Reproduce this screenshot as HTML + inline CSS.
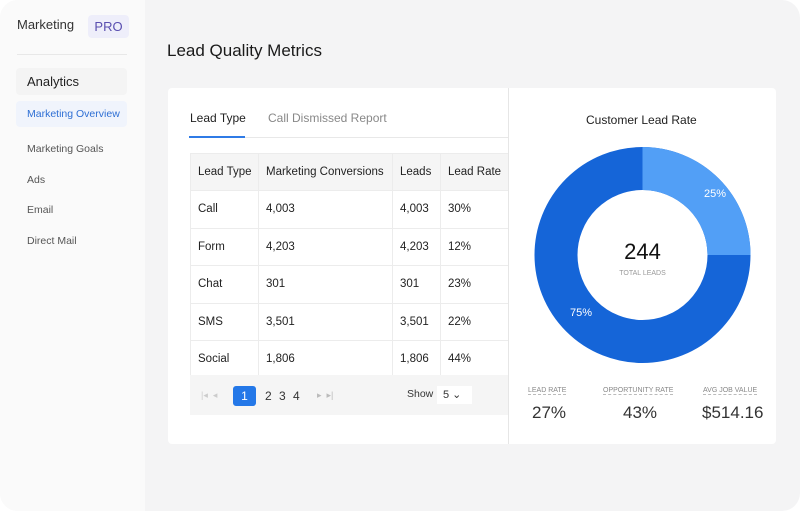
<!DOCTYPE html>
<html><head><meta charset="utf-8"><style>
*{margin:0;padding:0;box-sizing:border-box}
html,body{width:800px;height:511px;overflow:hidden;background:#fff;font-family:"Liberation Sans",sans-serif}
.frame{position:absolute;left:0;top:0;width:800px;height:511px;border-radius:18px;overflow:hidden;background:#f4f4f5}
.side{position:absolute;left:0;top:0;width:145px;height:511px;background:#fafafa}
.abs{position:absolute;white-space:nowrap}
.card{position:absolute;left:168px;top:88px;width:608px;height:356px;background:#fff;border-radius:4px}
table{border-collapse:collapse;table-layout:fixed;position:absolute;font-size:11.5px;color:#222;width:340px}
td{border:1px solid #ececec;padding-left:7px;height:37.5px;white-space:nowrap;overflow:hidden}
tr.h td{background:#f5f5f5;height:37px}
</style></head><body><div class="frame">
<div class="side">
<div class="abs" style="left:17px;top:17px;font-size:13px;color:#333">Marketing</div>
<div class="abs" style="left:88px;top:15px;width:41px;height:23px;background:#eeeefa;border-radius:4px;color:#5a4fb0;font-size:13px;text-align:center;line-height:23px">PRO</div>
<div class="abs" style="left:17px;top:54px;width:110px;height:1px;background:#e8e8e8"></div>
<div class="abs" style="left:16px;top:68px;width:111px;height:27px;background:#f4f4f4;border-radius:4px"></div>
<div class="abs" style="left:27px;top:74px;font-size:13px;color:#222">Analytics</div>
<div class="abs" style="left:16px;top:101px;width:111px;height:26px;background:#f0f4fc;border-radius:4px"></div>
<div class="abs" style="left:27px;top:108px;font-size:10.5px;color:#2e6fd4">Marketing Overview</div>
<div class="abs" style="left:27px;top:143px;font-size:10.5px;color:#555">Marketing Goals</div>
<div class="abs" style="left:27px;top:174px;font-size:10.5px;color:#555">Ads</div>
<div class="abs" style="left:27px;top:204px;font-size:10.5px;color:#555">Email</div>
<div class="abs" style="left:27px;top:235px;font-size:10.5px;color:#555">Direct Mail</div>
</div>
<div class="abs" style="left:167px;top:41px;font-size:17px;color:#1a1a1a">Lead Quality Metrics</div>
<div class="card"></div>
<div class="abs" style="left:190px;top:111px;font-size:12px;color:#222">Lead Type</div>
<div class="abs" style="left:268px;top:111px;font-size:12px;color:#888">Call Dismissed Report</div>
<div class="abs" style="left:190px;top:137px;width:318px;height:1px;background:#e8e8e8"></div>
<div class="abs" style="left:189px;top:136px;width:56px;height:2px;background:#2f7be6"></div>
<div class="abs" style="left:508px;top:88px;width:1px;height:356px;background:#e6e6e6"></div>
<div style="position:absolute;left:190px;top:153px;width:318px;height:262px;overflow:hidden">
<table style="left:0;top:0">
<colgroup><col style="width:68px"><col style="width:134px"><col style="width:48px"><col style="width:90px"></colgroup>
<tr class="h"><td>Lead Type</td><td>Marketing Conversions</td><td>Leads</td><td>Lead Rate</td></tr>
<tr><td>Call</td><td>4,003</td><td>4,003</td><td>30%</td></tr>
<tr><td>Form</td><td>4,203</td><td>4,203</td><td>12%</td></tr>
<tr><td>Chat</td><td>301</td><td>301</td><td>23%</td></tr>
<tr><td>SMS</td><td>3,501</td><td>3,501</td><td>22%</td></tr>
<tr><td>Social</td><td>1,806</td><td>1,806</td><td>44%</td></tr>
</table>
<div style="position:absolute;left:0;top:222px;width:318px;height:40px;background:#f5f5f5"></div>
</div>
<div class="abs" style="left:201px;top:390px;font-size:9px;color:#ccc">|◂ &nbsp;◂</div>
<div class="abs" style="left:233px;top:386px;width:23px;height:20px;background:#2478e8;border-radius:3px;color:#fff;font-size:12px;text-align:center;line-height:20px">1</div>
<div class="abs" style="left:265px;top:389px;font-size:12px;color:#333;word-spacing:4px">2 3 4</div>
<div class="abs" style="left:317px;top:390px;font-size:9px;color:#bbb">▸ &nbsp;▸|</div>
<div class="abs" style="left:407px;top:388px;font-size:10.5px;color:#333">Show</div>
<div class="abs" style="left:437px;top:386px;width:35px;height:18px;background:#fff;font-size:11px;color:#333;padding-left:6px;line-height:18px">5 ⌄</div>
<div class="abs" style="left:586px;top:113px;font-size:12px;color:#222">Customer Lead Rate</div>
<svg class="abs" style="left:0;top:0" width="800" height="511">
<circle cx="642.5" cy="255" r="86.5" fill="none" stroke="#1565d8" stroke-width="43"/>
<path d="M642.5 147 A108 108 0 0 1 750.5 255 L707.5 255 A65 65 0 0 0 642.5 190 Z" fill="#529ff6"/>
<text x="704" y="197" font-size="11" fill="#fff" font-family="Liberation Sans">25%</text>
<text x="570" y="316" font-size="11" fill="#fff" font-family="Liberation Sans">75%</text>
<text x="642.5" y="259" font-size="22" fill="#111" text-anchor="middle" font-family="Liberation Sans">244</text>
<text x="642.5" y="275" font-size="7" fill="#999" text-anchor="middle" font-family="Liberation Sans">TOTAL LEADS</text>
</svg>
<div class="abs" style="left:528px;top:387px;font-size:7px;color:#888;border-bottom:1px dashed #bbb">LEAD RATE</div>
<div class="abs" style="left:603px;top:387px;font-size:7px;color:#888;border-bottom:1px dashed #bbb">OPPORTUNITY RATE</div>
<div class="abs" style="left:703px;top:387px;font-size:7px;color:#888;border-bottom:1px dashed #bbb">AVG JOB VALUE</div>
<div class="abs" style="left:532px;top:403px;font-size:17px;color:#333">27%</div>
<div class="abs" style="left:623px;top:403px;font-size:17px;color:#333">43%</div>
<div class="abs" style="left:702px;top:403px;font-size:17px;color:#333">$514.16</div>
</div></body></html>
